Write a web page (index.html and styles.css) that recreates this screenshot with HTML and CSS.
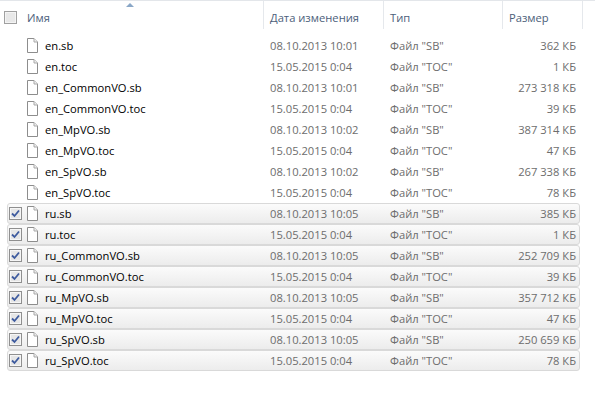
FILE: index.html
```html
<!DOCTYPE html>
<html lang="ru">
<head>
  <meta charset="UTF-8" />
  <title>Файлы</title>
  <link rel="stylesheet" href="styles.css">
</head>
<body>
  <div class="header">
    <div class="col name">
      <span class="check"></span>
      <span class="label">Имя</span>
      <span class="sort"></span>
    </div>
    <div class="col date">Дата изменения</div>
    <div class="col type">Тип</div>
    <div class="col size">Размер</div>
    <div class="col rest"></div>
  </div>

  <div class="list" id="list"></div>

  <script>
    const files = [
      ["en.sb", "08.10.2013 10:01", 'Файл "SB"', "362 КБ", false],
      ["en.toc", "15.05.2015 0:04", 'Файл "TOC"', "1 КБ", false],
      ["en_CommonVO.sb", "08.10.2013 10:01", 'Файл "SB"', "273 318 КБ", false],
      ["en_CommonVO.toc", "15.05.2015 0:04", 'Файл "TOC"', "39 КБ", false],
      ["en_MpVO.sb", "08.10.2013 10:02", 'Файл "SB"', "387 314 КБ", false],
      ["en_MpVO.toc", "15.05.2015 0:04", 'Файл "TOC"', "47 КБ", false],
      ["en_SpVO.sb", "08.10.2013 10:02", 'Файл "SB"', "267 338 КБ", false],
      ["en_SpVO.toc", "15.05.2015 0:04", 'Файл "TOC"', "78 КБ", false],
      ["ru.sb", "08.10.2013 10:05", 'Файл "SB"', "385 КБ", true],
      ["ru.toc", "15.05.2015 0:04", 'Файл "TOC"', "1 КБ", true],
      ["ru_CommonVO.sb", "08.10.2013 10:05", 'Файл "SB"', "252 709 КБ", true],
      ["ru_CommonVO.toc", "15.05.2015 0:04", 'Файл "TOC"', "39 КБ", true],
      ["ru_MpVO.sb", "08.10.2013 10:05", 'Файл "SB"', "357 712 КБ", true],
      ["ru_MpVO.toc", "15.05.2015 0:04", 'Файл "TOC"', "47 КБ", true],
      ["ru_SpVO.sb", "08.10.2013 10:05", 'Файл "SB"', "250 659 КБ", true],
      ["ru_SpVO.toc", "15.05.2015 0:04", 'Файл "TOC"', "78 КБ", true]
    ];

    const fileIcon = `<svg class="icon" width="11" height="15" viewBox="0 0 11 15">
      <path d="M0.5 0.5 H7 L10.5 4 V14.5 H0.5 Z" fill="#fff" stroke="#8d8d8d"/>
      <path d="M7 0.5 V4 H10.5" fill="#f0f0f0" stroke="#a8a8a8"/>
    </svg>`;

    const checkMark = `<svg width="13" height="13" viewBox="0 0 13 13">
      <rect x="0.5" y="0.5" width="12" height="12" fill="#f4f4f4" stroke="#8f8f8f"/>
      <rect x="1.5" y="1.5" width="10" height="10" fill="#e6e6e6" stroke="#f6f6f6"/>
      <path d="M3 6.5 L5.5 9 L10 3.5" fill="none" stroke="#3d5a9e" stroke-width="1.8"/>
    </svg>`;

    const list = document.getElementById("list");
    files.forEach(f => {
      const row = document.createElement("div");
      row.className = "row" + (f[4] ? " selected" : "");
      row.innerHTML = `
        <div class="cell name">
          <span class="box">${f[4] ? checkMark : ""}</span>
          ${fileIcon}
          <span class="fname">${f[0]}</span>
        </div>
        <div class="cell date">${f[1]}</div>
        <div class="cell type">${f[2]}</div>
        <div class="cell size">${f[3]}</div>
      `;
      list.appendChild(row);
    });
  </script>
</body>
</html>
```

FILE: styles.css
```css
body {
  margin: 0;
  background: #fff;
  font-family: "Open Sans", "Noto Sans", Arial, sans-serif;
  font-size: 11.2px;
  width: 595px;
  height: 394px;
  overflow: hidden;
}

.header {
  display: flex;
  height: 29px;
  border-top: 1px solid #e3e6ea;
  box-sizing: border-box;
  color: #4c607a;
}

.header .col {
  display: flex;
  align-items: center;
  border-right: 1px solid #e5e8ec;
  box-sizing: border-box;
  padding-left: 6px;
  padding-top: 4px;
}

.header .name {
  width: 264px;
  padding-left: 4px;
  position: relative;
}

.header .date { width: 120px; }
.header .type { width: 119px; }
.header .size { width: 80px; }
.header .rest { flex: 1; border-right: none; }

.check {
  width: 11px;
  height: 11px;
  border: 1px solid #a0a0a0;
  background: #e8e8e8;
  box-shadow: inset 0 0 0 1px #f4f4f4;
  margin-right: 10px;
}

.sort {
  position: absolute;
  left: 126px;
  top: 2px;
  width: 0;
  height: 0;
  border-left: 4px solid transparent;
  border-right: 4px solid transparent;
  border-bottom: 4px solid #8aa7c7;
}

.list {
  padding-top: 6px;
}

.row {
  display: flex;
  align-items: center;
  height: 21px;
  margin: 0 15px 0 7px;
  box-sizing: border-box;
  border: 1px solid transparent;
  border-radius: 3px;
  color: #6d6d6d;
}

.row.selected {
  border-color: #d9d9d9;
  background: linear-gradient(#fbfbfb, #ececec);
}

.cell {
  box-sizing: border-box;
}

.cell.name {
  width: 256px;
  display: flex;
  align-items: center;
  color: #000;
}

.box {
  width: 13px;
  height: 13px;
  margin-left: 1px;
  margin-right: 5px;
  display: flex;
}

.icon {
  margin-right: 7px;
}

.cell.date {
  width: 120px;
  padding-left: 6px;
}

.cell.type {
  width: 119px;
  padding-left: 6px;
}

.cell.size {
  width: 76px;
  text-align: right;
  padding-right: 3px;
}
```
